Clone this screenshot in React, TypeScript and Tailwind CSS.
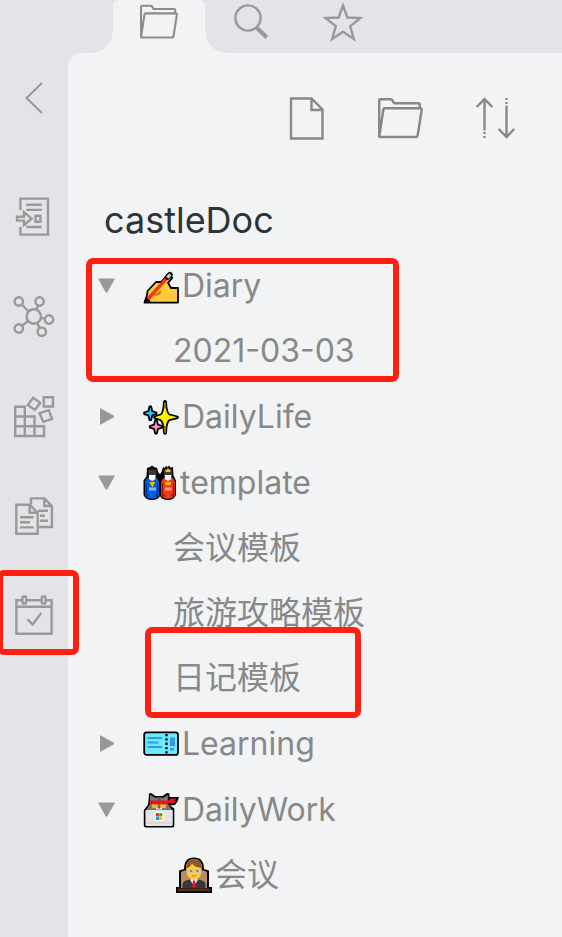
import { useState } from "react";
import type { ReactNode } from "react";

interface IconProps {
  children: ReactNode;
  size?: string;
}

function Icon({ children, size = "size-[44px]" }: IconProps) {
  return (
    <svg
      viewBox="0 0 44 44"
      className={size}
      fill="none"
      stroke="currentColor"
      strokeWidth={2.4}
      aria-hidden="true"
    >
      {children}
    </svg>
  );
}

const QuickSwitchIcon = () => (
  <Icon>
    <path d="M8.4 16V4.6H36v36H8.4V33" />
    <path d="M5 22.8h7v-4.6l7.6 6.5-7.6 6.4v-4.5H5z" />
    <path d="M23.6 21.7h4.8v6h-4.8zM14.3 10.7h15.4M14.3 15.9h15.4M14.3 33h15.4" />
  </Icon>
);

const GraphIcon = () => (
  <Icon>
    <circle cx="21.8" cy="22.500" r="7.2" />
    <circle cx="6.8" cy="7.500" r="4.2" />
    <circle cx="27.6" cy="7.500" r="4.2" />
    <circle cx="37" cy="25.500" r="4.2" />
    <circle cx="6.8" cy="34.500" r="4.2" />
    <circle cx="29.8" cy="37.800" r="4.2" />
    <path d="M9.8 10.500l6.8 7M26 11.500l-1.6 4.4M29 23.900l3.8.8M10 31.700l6.4-5M27.6 34.100l-2.6-5.2" />
  </Icon>
);

const BlocksIcon = () => (
  <Icon>
    <path d="M3.2 12.8h9.6v29.2H3.2zM3.2 22.5h19.3v19.5H3.2zM3.2 32.3h28.9v9.7H3.2z" />
    <path d="M21.2 3.8l7 5.1-5.4 7-7-5zM31.8 3.2h9.2v9.3h-9.2zM27.6 19.2l9.2-3 3.2 8.8-8.8 2.8z" />
  </Icon>
);

const PagesIcon = () => (
  <Icon>
    <path d="M4.3 10.7h13.4l8 8.2v20.8H4.3zM17.6 11v7.8h7.8" />
    <path d="M19 10.5V4.4h13.4l7.5 7.6v21H27M32.3 4.6V12H40" />
    <path d="M8 23.3h13.7M8 28.3h10M8 33.4h13.7M26 16.8h10M28 21.8h5M28 26.8h8" />
  </Icon>
);

const CalendarIcon = () => (
  <Icon>
    <path d="M10 6.2H4.4v33.6h35.2V6.2H34M14.6 6.2h14.8M4.4 12.8h35.2" />
    <rect x="10.4" y="2.5" width="3.8" height="7" rx="1" />
    <rect x="29.8" y="2.5" width="3.8" height="7" rx="1" />
    <path d="M15.4 25.2l5.3 5.2 8.6-11.5" />
  </Icon>
);

const FolderIcon = ({ size }: { size?: string }) => (
  <Icon size={size}>
    <path
      strokeLinejoin="round"
      d="M1.2 39.5V4.2q0-1 1-1h10.3q1 0 1.6 1l1.6 2.8h23.6q1.5 0 1.5 1.5v3.4M1.2 39.6L5.2 13.4q.2-1.4 1.6-1.4h34.5q1.6 0 1.4 1.5L38.8 38.5q-.2 1.5-1.6 1.5H2.2q-1 0-1-1z"
    />
  </Icon>
);

const railItems = [
  { label: "Open quick switcher", icon: <QuickSwitchIcon /> },
  { label: "Open graph view", icon: <GraphIcon /> },
  { label: "Random note", icon: <BlocksIcon /> },
  { label: "Insert template", icon: <PagesIcon /> },
  { label: "Open today's note", icon: <CalendarIcon />, marked: true },
];

function Emoji({ children, narrow }: { children: ReactNode; narrow?: boolean }) {
  return (
    <svg
      viewBox={narrow ? "0 0 34 36" : "0 0 36 36"}
      className={narrow ? "mx-[3px] h-9 w-[34px] shrink-0" : "mx-[3px] size-9 shrink-0"}
      aria-hidden="true"
    >
      {children}
    </svg>
  );
}

const WritingHand = () => (
  <Emoji>
    <path
      d="M1.5 34.6L4 27.5 4.5 23l8.5-9h5l7.8-8.3 3.5 4.2-4.3 4.9 3 5.2H35v14.6z"
      fill="#ffc83d"
      stroke="#000"
      strokeWidth="1.8"
      strokeLinejoin="round"
    />
    <path d="M10 27.5l7.5-5q1.5 1.5-.5 4-3 2-7 1z" fill="#d67d00" />
    <path d="M4.5 31.5L25 8.8" stroke="#f03a17" strokeWidth="3.4" />
    <path d="M24.5 9.2l2.5-2.6" stroke="#000" strokeWidth="5.4" strokeLinecap="round" />
    <path d="M24.3 9.7l3-3.2" stroke="#ccc" strokeWidth="3.2" />
    <path d="M.8 34.800l1.8-5.800 5 4-1 2z" fill="#000" />
  </Emoji>
);

const Sparkles = () => (
  <Emoji>
    <g stroke="#000" strokeWidth="1.8" strokeLinejoin="round">
      <path d="M6.5 7.5h1.6l1.2 4.7 4.2 1.3v1.6l-4.2 1.3-1.2 4.7H6.5l-1.2-4.7-4.2-1.3v-1.6l4.2-1.3z" fill="#26c6f5" />
      <path d="M12.2 21h1.6l1.2 4.7 4.2 1.3v1.6l-4.2 1.3-1.2 4.7h-1.6L11 29.9l-4.200-1.300V27l4.200-1.300z" fill="#ff8fc0" />
      <path d="M21 2.500q1-1.300 2 0 .6 11.500 3.500 13l8 2q1 .8 0 1.600l-8 2q-2.900 1.500-3.500 13-1 1.300-2 0-.6-11.500-3.500-13l-6-2q-1-.8 0-1.600l6-2q2.900-1.500 3.500-13z" fill="#fff100" />
    </g>
    <path d="M21.300 3.500h1.500l.6 6h-2.700zM20.700 27h2.700l-.6 7h-1.500z" fill="#807900" />
  </Emoji>
);

const Dolls = () => (
  <Emoji narrow>
    <path
      d="M4 3l3-1 2-1.500L11 2l3 1 1.500 5L17 9l1.500-2L20 2l2 1 1-2.500 1.500 2L26 .5l1.500 2L30 2l.5 8.500 2.500 5V30q-2 5-8 5-6 0-8-4-2 4-8 4-6.500 0-8.500-5V15.500L3.500 11z"
      fill="#000"
    />
    <path d="M5.500 4.500h8v6h-8zM21 5h8v6h-8z" fill="#3b3b3b" />
    <path d="M4.500 13h9.500l2 4v13q-2 3.800-7 3.800T2 30V17z" fill="#0063d6" />
    <path d="M20.500 13H30l2 4v13q-2 3.800-7 3.800T18 30V17z" fill="#f03a17" />
    <path d="M3.500 18v11l2 2.500M14.600 18v11l-2 2.500" stroke="#0027b4" strokeWidth="1.300" fill="none" />
    <path d="M19.500 18v11l2 2.500M30.600 18v11l-2 2.500" stroke="#a4070f" strokeWidth="1.300" fill="none" />
    <path d="M6 10h6.500v4L9.300 16 6 14zM21.800 10h6.500v4L25 16l-3.200-2z" fill="#fff" />
    <path d="M6.500 17h5.600L9.300 22.500zM22.300 17h5.600v3h-5.600z" fill="#ffb900" />
    <path d="M22.500 4l1 .8L25 3l1.500 1.800 1-.8v3h-5z" fill="#ffb900" />
    <path d="M6 22.500h7v3H6z" fill="#82b9ef" />
    <path d="M21.700 22.500h7v3h-7z" fill="#ff9d91" />
  </Emoji>
);

const Ticket = () => (
  <Emoji>
    <rect x="1.200" y="6.300" width="33.800" height="22.600" rx="2.500" fill="#69eaff" stroke="#000" strokeWidth="1.800" />
    <path d="M4.500 12h14.500M4.500 16.500h11M4.500 21h14.500" stroke="#3a96dd" strokeWidth="2" />
    <path d="M27 11.500h5v8.500h-5zM27 22h4v2.500h-4z" fill="#3a96dd" />
    <path d="M23.500 8v21" stroke="#000" strokeWidth="2.300" strokeDasharray="2.300 2" />
  </Emoji>
);

const NinjaCat = () => (
  <Emoji>
    <path
      d="M5.500 9L6 1.500l2-.5 4.500 3h7L24 1l2.500.5V5H36l-1.500 4.500L32 13l-5 .5 4.300 3V33q0 2.500-2.500 2.500H3.300Q.8 35.500.8 33V18l4-5z"
      fill="#000"
    />
    <path d="M7 2.800l5 3h8.500l4.200-3L25 12l3.500 5H4l3-5z" fill="#777" />
    <path d="M13.500 5h5l-2.500 4z" fill="#555" />
    <path d="M7 8.500h18l3-2h6l-3 2.500h2.500l-3 2.500H25v1H7z" fill="#e81224" />
    <path d="M8.500 12.500h6.500l-1 3.500H9.500zM17 12.500h6.500l-1 3.500H18z" fill="#ffb900" />
    <path d="M13 15.500h6v2h-6z" fill="#eee" />
    <path d="M14.700 15h2.600L16 17.500z" fill="#e81224" />
    <rect x="2.400" y="17.500" width="27.400" height="16.400" rx="1.500" fill="#e4e4e4" />
    <path d="M3 31h26.300" stroke="#ccc" />
    <path d="M11.500 20h9v9h-9z" fill="#fff" />
    <path d="M12.800 21h3.200v3.400h-3.200z" fill="#f03a17" />
    <path d="M16.200 21h3.200v3.400h-3.200z" fill="#16c60c" />
    <path d="M12.800 24.600h3.200V28h-3.200z" fill="#00a2ed" />
    <path d="M16.200 24.600h3.200V28h-3.200z" fill="#ffb900" />
  </Emoji>
);

const OfficeWorker = () => (
  <Emoji>
    <path d="M8 12Q8 .5 18 .5T28 12l5 1.500V30H36v6H0v-6h3V13.500z" fill="#000" />
    <path d="M5 15l3-1.500h20l3 1.500v16H5z" fill="#b98b66" />
    <path d="M1.500 31.500h33v2.800h-33z" fill="#5c2e12" />
    <path d="M6.500 31.500v-5q1-3 7-4h9q6 1 7 4v5z" fill="#383838" />
    <path d="M14.500 20h7v3.500L18 29l-3.500-5.500z" fill="#f2f2f2" />
    <path d="M17 23.500h2l.8 6-1.800 2-1.800-2z" fill="#e81224" />
    <path d="M10 11q0-9 8-9t8 9l-1 6.500q-2.500 5-7 5t-7-5z" fill="#ffc83d" />
    <path d="M10 11.500Q10 2 18 2q8.500 0 7.800 10L24 10.500q-5 0-8-4-1.500 3.500-6 5z" fill="#8e562e" />
    <path d="M12.700 12.500h4v3h-4zM19.500 12.500h4v3h-4z" fill="#8edcff" />
    <circle cx="14.900" cy="14" r="1" fill="#2874b8" />
    <circle cx="21.300" cy="14" r="1" fill="#2874b8" />
    <path d="M15.800 18.500q2.200 1.500 4.400 0" stroke="#e0661c" fill="none" />
  </Emoji>
);

interface FileNode {
  name: string;
  emoji?: ReactNode;
  marked?: boolean;
}

interface FolderNode extends FileNode {
  open: boolean;
  files: FileNode[];
}

const folders: FolderNode[] = [
  { name: "Diary", emoji: <WritingHand />, open: true, marked: true, files: [{ name: "2021-03-03" }] },
  { name: "DailyLife", emoji: <Sparkles />, open: false, files: [] },
  {
    name: "template",
    emoji: <Dolls />,
    open: true,
    files: [{ name: "会议模板" }, { name: "旅游攻略模板" }, { name: "日记模板", marked: true }],
  },
  { name: "Learning", emoji: <Ticket />, open: false, files: [] },
  { name: "DailyWork", emoji: <NinjaCat />, open: true, files: [{ name: "会议", emoji: <OfficeWorker /> }] },
];

function Folder({ folder }: { folder: FolderNode }) {
  const [open, setOpen] = useState(folder.open);

  return (
    <li className="relative">
      <button
        type="button"
        aria-expanded={open}
        onClick={() => setOpen(!open)}
        className="flex h-[65px] w-full items-center pl-[30px] text-left"
      >
        <svg viewBox="0 0 17 17" className="mr-[25px] size-[17px] shrink-0 text-[#999]" fill="currentColor" aria-hidden="true">
          {open ? (
            <path d="M1 1.500h15q1 0 .5 1L9.500 15q-1 1.300-2 0L.5 2.500q-.5-1 .5-1z" />
          ) : (
            <path d="M2 1q0-1 1-.5L15.500 7.500q1.300 1 0 2L3 16.500q-1 .5-1-.5z" />
          )}
        </svg>
        {folder.emoji}
        <span>{folder.name}</span>
      </button>
      {open && (
        <ul>
          {folder.files.map((file) => (
            <li key={file.name} className="relative">
              <button type="button" className="flex h-[65px] w-full items-center pl-[105px] text-left">
                {file.emoji}
                <span>{file.name}</span>
              </button>
              {file.marked && (
                <span className="pointer-events-none absolute -top-[18px] -bottom-2 left-[77px] w-[216px] rounded-[7px] border-6 border-[#ff2012]" />
              )}
            </li>
          ))}
        </ul>
      )}
      {folder.marked && (
        <span className="pointer-events-none absolute top-[5px] bottom-px left-[18px] w-[313px] rounded-[7px] border-6 border-[#ff2012]" />
      )}
    </li>
  );
}

function App() {
  return (
    <div className="flex min-h-screen bg-[#e3e4e8] font-['Inter','Noto_Sans_CJK_SC',sans-serif] text-[#888]">
      <nav className="flex w-[68px] shrink-0 flex-col text-[#999]">
        <button type="button" aria-label="Collapse" className="mt-[66px] mb-9 flex h-16 items-center justify-center">
          <Icon>
            <path d="M30 7L14.500 22 30 37" strokeWidth="2" />
          </Icon>
        </button>
        {railItems.map((item) => (
          <button
            key={item.label}
            type="button"
            aria-label={item.label}
            className="relative flex h-[100px] items-center justify-center"
          >
            {item.icon}
            {item.marked && (
              <span className="pointer-events-none absolute top-1 -right-[11px] bottom-[11px] -left-[3px] rounded-[7px] border-6 border-[#ff2012]" />
            )}
          </button>
        ))}
      </nav>

      <div className="flex min-w-0 grow flex-col">
        <header className="flex h-[53px] pl-[45px] text-[#999]">
          <button
            type="button"
            aria-label="Files"
            className="relative flex w-[92px] justify-center rounded-t-[6px] bg-[#f2f3f5] pt-[3px] text-[#8c8c8c]"
          >
            <span className="absolute bottom-0 -left-[21px] size-[21px] bg-[radial-gradient(circle_at_0_0,transparent_20px,#f2f3f5_21px)]" />
            <FolderIcon size="size-[38px]" />
            <span className="absolute -right-[21px] bottom-0 size-[21px] bg-[radial-gradient(circle_at_100%_0,transparent_20px,#f2f3f5_21px)]" />
          </button>
          <button type="button" aria-label="Search" className="flex w-[92px] justify-center">
            <Icon>
              <circle cx="19" cy="18" r="12.600" />
              <path d="M27.500 27.500l10.300 10" strokeWidth="4" />
            </Icon>
          </button>
          <button type="button" aria-label="Starred" className="flex w-[92px] justify-center">
            <Icon>
              <path d="M22 5.500l4.400 12 13 .6-10.200 8 3.600 12.800L22 31.800l-10.800 7.100 3.600-12.800-10.200-8 13-.6z" />
            </Icon>
          </button>
        </header>

        <main className="grow rounded-tl-[13px] bg-[#f2f3f5]">
          <div className="flex h-[130px] items-center justify-end pr-[21px]">
            <button type="button" aria-label="New note" className="flex w-[94px] justify-center">
              <Icon>
                <path d="M7 2.500h20.500L38.500 13.500v29H7zM27.500 2.500V14h11" />
              </Icon>
            </button>
            <button type="button" aria-label="New folder" className="flex w-[94px] justify-center">
              <FolderIcon size="size-[45px]" />
            </button>
            <button type="button" aria-label="Change sort order" className="flex w-[94px] justify-center">
              <Icon>
                <path d="M12.500 34.500V3M4.700 11l7.800-8 7.800 8M34.500 9.500V41M26.700 33l7.800 8 7.800-8" />
                <path d="M12.500 36v6M34.500 2v6" strokeDasharray="2 2" />
              </Icon>
            </button>
          </div>

          <h1 className="flex h-[70px] items-center pt-[3px] pl-9 text-[36px] font-normal text-[#2e3338]">
            castleDoc
          </h1>

          <ul className="flex flex-col gap-px text-[32px] leading-10">
            {folders.map((folder) => (
              <Folder key={folder.name} folder={folder} />
            ))}
          </ul>
        </main>
      </div>
    </div>
  );
}

export default App;
